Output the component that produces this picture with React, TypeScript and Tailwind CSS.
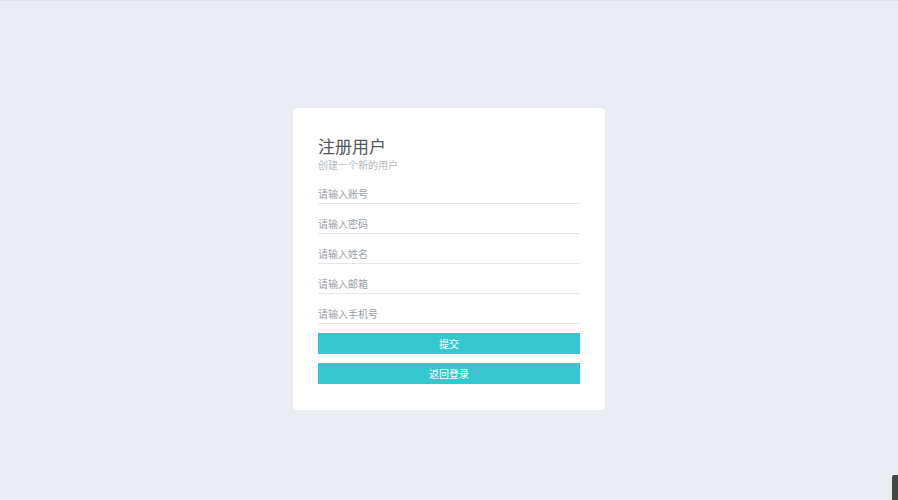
const fields = ["请输入账号", "请输入密码", "请输入姓名", "请输入邮箱", "请输入手机号"];

export default function App() {
  return (
    <div
      className="relative min-h-[500px] w-full bg-[#e9edf1] pt-[108px]"
      style={{ fontFamily: '"Noto Sans CJK SC", "Noto Sans", sans-serif' }}
    >
      <div className="h-px w-full bg-[#dde2e6] absolute top-0 left-0" />
      <div className="mx-auto w-[312px] rounded-[4px] bg-white px-[25px] pt-[28px] pb-[26px]">
        <h1 className="text-[17px] leading-[20px] font-normal text-[#51565b]">注册用户</h1>
        <p className="mt-[3px] text-[10px] leading-[12px] text-[#b4b8bc]">创建一个新的用户</p>
        <div className="mt-[11px] flex flex-col gap-[8px]">
          {fields.map((f) => (
            <input
              key={f}
              type="text"
              placeholder={f}
              className="h-[22px] w-full border-b border-[#e3e5e8] bg-transparent pt-[1px] text-[10px] text-[#555] outline-none placeholder:text-[#9a9ea3]"
            />
          ))}
        </div>
        <button
          type="button"
          className="mt-[9px] h-[21px] w-full bg-[#34c7d0] text-[10px] text-white"
        >
          提交
        </button>
        <button
          type="button"
          className="mt-[9px] h-[21px] w-full bg-[#34c7d0] text-[10px] text-white"
        >
          返回登录
        </button>
      </div>
      <div className="absolute right-0 bottom-0 h-[25px] w-[6px] rounded-tl-[2px] bg-[#3f4a45]" />
    </div>
  );
}
